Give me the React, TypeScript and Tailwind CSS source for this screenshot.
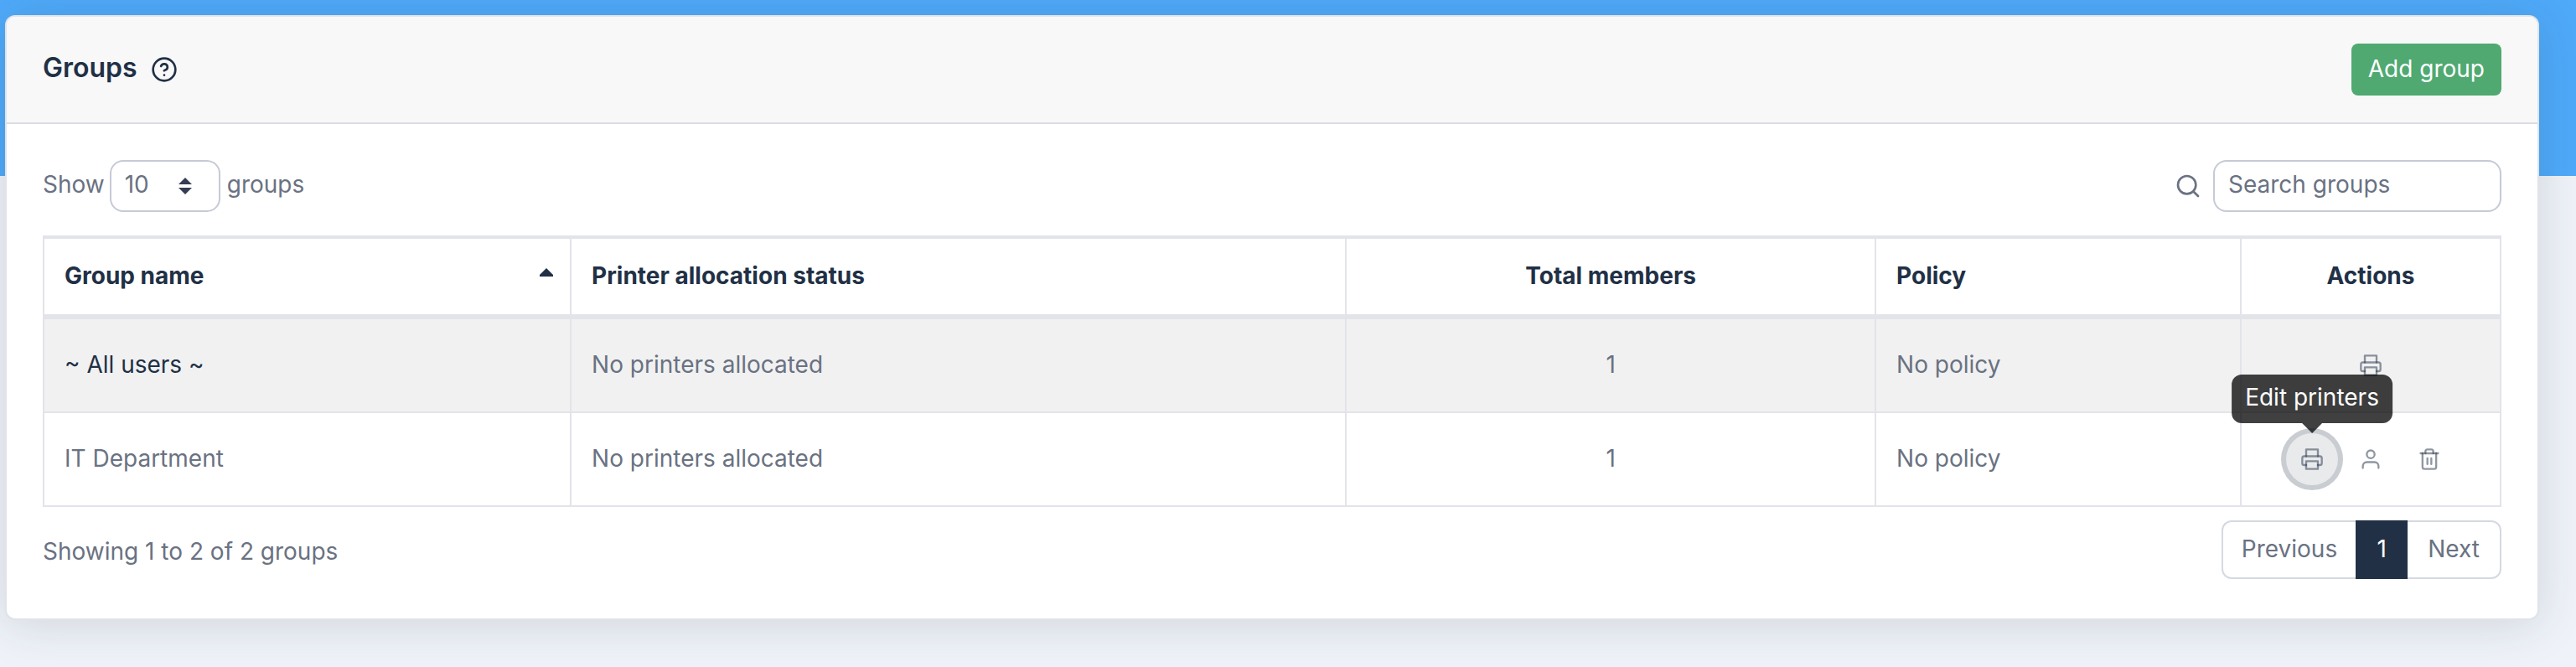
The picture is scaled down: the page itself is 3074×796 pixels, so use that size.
import type { ReactNode } from "react"
import { FiHelpCircle, FiPrinter, FiSearch, FiTrash2, FiUser } from "react-icons/fi"

type Group = {
  name: string
  status: string
  members: number
  policy: string
  builtIn?: boolean
}

const groups: Group[] = [
  { name: "~ All users ~", status: "No printers allocated", members: 1, policy: "No policy", builtIn: true },
  { name: "IT Department", status: "No printers allocated", members: 1, policy: "No policy" },
]

function ActionButton({ label, active, children }: { label: string; active?: boolean; children: ReactNode }) {
  return (
    <button
      type="button"
      aria-label={label}
      className={
        active
          ? "relative flex size-[62px] items-center justify-center rounded-full bg-[#e8eaec] text-[#213045]/50 ring-6 ring-[#c9cdd2]"
          : "flex size-[62px] items-center justify-center rounded-full text-[#213045]/50"
      }
    >
      {children}
      {active && (
        <span
          role="tooltip"
          className="absolute bottom-[74px] left-1/2 -translate-x-1/2 rounded-xl bg-black/75 px-4 pt-1.5 pb-2.5 leading-[42px] whitespace-nowrap text-white"
        >
          {label}
          <svg viewBox="0 0 24 12" className="absolute top-full left-1/2 h-3 w-6 -translate-x-1/2 text-black/75">
            <path d="M0 0h24L12 12z" fill="currentColor" />
          </svg>
        </span>
      )}
    </button>
  )
}

function Toolbar() {
  return (
    <div className="flex items-center justify-between">
      <label className="flex items-center gap-1.5">
        <span className="pb-1">Show</span>
        <span className="relative">
          <select
            defaultValue="10"
            className="block h-[62px] w-[132px] appearance-none rounded-2xl border-2 border-[#c5cad6] bg-white pb-1 pl-4"
          >
            <option>10</option>
            <option>25</option>
            <option>50</option>
            <option>100</option>
          </select>
          <svg
            viewBox="0 0 16 20"
            className="pointer-events-none absolute top-[21px] right-[34px] h-5 w-4 text-[#343d52]"
          >
            <path d="M8 0l8 8H0zM8 20l8-8H0z" fill="currentColor" />
          </svg>
        </span>
        <span className="pb-1 pl-0.5">groups</span>
      </label>
      <label className="flex items-center gap-3.5">
        <FiSearch className="size-8" />
        <input
          type="search"
          aria-label="Search groups"
          placeholder="Search groups"
          className="h-[62px] w-[344px] rounded-2xl border-2 border-[#c5cad6] bg-white px-4 pb-1 placeholder:text-gray-500"
        />
      </label>
    </div>
  )
}

function GroupsTable() {
  const th = "h-[100px] border-t-4 border-b-6 border-l-2 border-[#e3e4ea] px-6 pb-0.5 font-bold last:border-r-2"
  const td = "h-28 border-b-2 border-l-2 border-[#e3e4ea] px-6 pb-0.5"

  return (
    <table className="mt-7 w-full table-fixed border-separate border-spacing-0">
      <colgroup>
        <col className="w-[21.44%]" />
        <col className="w-[31.53%]" />
        <col className="w-[21.54%]" />
        <col className="w-[14.86%]" />
        <col />
      </colgroup>
      <thead className="text-[#213045]">
        <tr>
          <th className={`${th} text-left`} aria-sort="ascending">
            <span className="flex items-center justify-between">
              Group name
              <svg viewBox="0 0 16 10" className="-mr-1 mb-2 h-2.5 w-4">
                <path d="M8 0l8 8v2H0V8z" fill="currentColor" />
              </svg>
            </span>
          </th>
          <th className={`${th} text-left`}>Printer allocation status</th>
          <th className={`${th} text-center`}>Total members</th>
          <th className={`${th} text-left`}>Policy</th>
          <th className={`${th} text-center`}>Actions</th>
        </tr>
      </thead>
      <tbody>
        {groups.map((group) => (
          <tr key={group.name} className="odd:bg-[#f1f1f1]">
            <td className={group.builtIn ? `${td} text-[#213045]` : td}>{group.name}</td>
            <td className={td}>{group.status}</td>
            <td className={`${td} text-center`}>{group.members}</td>
            <td className={td}>{group.policy}</td>
            <td className="h-28 border-x-2 border-b-2 border-[#e3e4ea]">
              <div className="flex justify-center gap-2">
                <ActionButton label="Edit printers" active={!group.builtIn}>
                  <FiPrinter className="size-7" />
                </ActionButton>
                {!group.builtIn && (
                  <>
                    <ActionButton label="Edit members">
                      <FiUser className="size-7" />
                    </ActionButton>
                    <ActionButton label="Delete group">
                      <FiTrash2 className="size-7" />
                    </ActionButton>
                  </>
                )}
              </div>
            </td>
          </tr>
        ))}
      </tbody>
    </table>
  )
}

function Pagination() {
  return (
    <div className="mt-4 flex items-center justify-between">
      <p className="pt-1">Showing 1 to 2 of 2 groups</p>
      <nav aria-label="Pages" className="flex h-[70px]">
        <button type="button" className="rounded-l-xl border-2 border-r-0 border-[#d5d9e1] px-[22px] pb-0.5">
          Previous
        </button>
        <button type="button" aria-current="page" className="w-[62px] bg-[#213045] pb-0.5 text-white">
          1
        </button>
        <button type="button" className="rounded-r-xl border-2 border-l-0 border-[#d5d9e1] px-6 pb-0.5">
          Next
        </button>
      </nav>
    </div>
  )
}

export default function App() {
  return (
    <div className="min-h-screen overflow-x-hidden bg-[#eff3f9] font-['Inter',sans-serif] text-[28px] leading-[42px] text-gray-500">
      <div className="h-[210px] bg-[#4faafa]" />
      <main className="-mt-48 mr-11 ml-1.5 rounded-xl border-2 border-[#e0e3e9] bg-white shadow-[0_5px_56px_rgba(33,40,50,0.15)]">
        <header className="flex h-32 items-center justify-between rounded-t-[10px] border-b-2 border-[#dcdee5] bg-[#f8f8f8] px-[43px]">
          <h1 className="flex items-center gap-4 text-[32px] font-semibold text-[#213045]">
            <span className="pb-1">Groups</span>
            <FiHelpCircle className="size-8" />
          </h1>
          <button type="button" className="h-[62px] rounded-lg bg-[#4fa970] px-5 pb-0.5 text-white">
            Add group
          </button>
        </header>
        <div className="px-[43px] pt-[43px] pb-[47px]">
          <Toolbar />
          <GroupsTable />
          <Pagination />
        </div>
      </main>
    </div>
  )
}
